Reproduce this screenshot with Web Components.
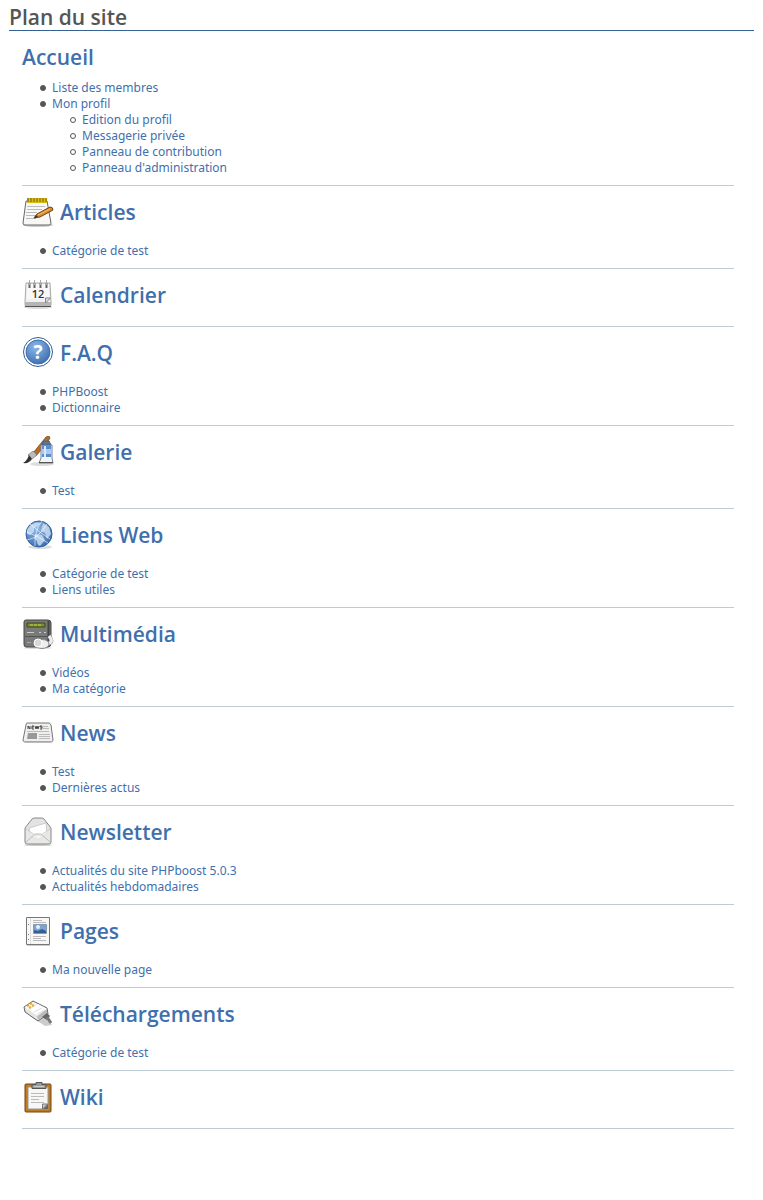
<!DOCTYPE html>
<html lang="fr">
<head>
<meta charset="utf-8">
<title>Plan du site</title>
<style>
body { margin: 0; background: #fff; color: #555; font: 12px/16px "Noto Sans", "Open Sans", sans-serif; }
</style>
</head>
<body>
<site-map></site-map>

<template id="site-map">
<style>
:host { display: block; padding: 4px 9px 70px; }
header { border-bottom: 1px solid #366393; }
h1 { margin: 0; font: 600 21px/26px "Open Sans", sans-serif; }
main { padding: 12px 20px 0 13px; }
ul { margin: 0; padding: 0 0 0 30px; list-style: none; }
li::before { content: ""; display: inline-block; box-sizing: border-box; width: 6px; height: 6px; margin: 0 6px 0 -12px; border: 1px solid #555; border-radius: 50%; background: #555; vertical-align: 1px; }
li li::before { background: none; }
a { color: #3f70ad; text-decoration: none; }
a:hover { text-decoration: underline; }
</style>
<header><h1>Plan du site</h1></header>
<main>
<map-section heading="Accueil"><ul>
<li><a href="#membres">Liste des membres</a></li>
<li><a href="#profil">Mon profil</a><ul>
<li><a href="#edition">Edition du profil</a></li>
<li><a href="#messagerie">Messagerie privée</a></li>
<li><a href="#contribution">Panneau de contribution</a></li>
<li><a href="#administration">Panneau d'administration</a></li>
</ul></li></ul></map-section>
<map-section heading="Articles" icon="articles"><ul><li><a href="#a1">Catégorie de test</a></li></ul></map-section>
<map-section heading="Calendrier" icon="calendar"></map-section>
<map-section heading="F.A.Q" icon="faq"><ul><li><a href="#f1">PHPBoost</a></li><li><a href="#f2">Dictionnaire</a></li></ul></map-section>
<map-section heading="Galerie" icon="gallery"><ul><li><a href="#g1">Test</a></li></ul></map-section>
<map-section heading="Liens Web" icon="web"><ul><li><a href="#w1">Catégorie de test</a></li><li><a href="#w2">Liens utiles</a></li></ul></map-section>
<map-section heading="Multimédia" icon="media"><ul><li><a href="#m1">Vidéos</a></li><li><a href="#m2">Ma catégorie</a></li></ul></map-section>
<map-section heading="News" icon="news"><ul><li><a href="#n1">Test</a></li><li><a href="#n2">Dernières actus</a></li></ul></map-section>
<map-section heading="Newsletter" icon="newsletter"><ul><li><a href="#l1">Actualités du site PHPboost 5.0.3</a></li><li><a href="#l2">Actualités hebdomadaires</a></li></ul></map-section>
<map-section heading="Pages" icon="pages"><ul><li><a href="#p1">Ma nouvelle page</a></li></ul></map-section>
<map-section heading="Téléchargements" icon="download"><ul><li><a href="#t1">Catégorie de test</a></li></ul></map-section>
<map-section heading="Wiki" icon="wiki"></map-section>
</main>
</template>

<template id="map-section">
<style>
:host { display: block; padding-bottom: 1px; margin-bottom: 10px; border-bottom: 1px solid #bdccd4; }
h2 { display: flex; align-items: center; gap: 6px; margin: 0 0 14px; font: 600 21px/32px "Open Sans", sans-serif; }
:host(:not([icon])) h2 { line-height: 28px; margin-bottom: 8px; }
:host(:not([icon])) map-icon { display: none; }
a { color: #3f70ad; text-decoration: none; }
::slotted(ul) { padding-top: 1px !important; padding-bottom: 8px !important; }
</style>
<h2><map-icon></map-icon><a></a></h2>
<slot></slot>
</template>

<script>
const ICONS = {
articles: `<ellipse cx="16" cy="29" rx="15" ry="2" fill="#ccc"/><path d="M4 5h21l4 22q0 2-2 2H3q-2 0-2-2z" fill="#f7f7f6" stroke="#666"/><path d="M5 2h20v5H5z" fill="#d9bc15"/><path d="M6 2v4m3-4v4m3-4v4m3-4v4m3-4v4m3-4v4m3-4v4" stroke="#765f08"/><path d="M5 10.500h18M5 13.500h15M4 16.500h11M4 19.500h9M4 22.500h10" stroke="#bbb"/><path d="M12 22l3-4L28 11q3 0 3 3L18 21z" fill="#d98a2c" stroke="#704214"/><path d="M16 19l12-6" stroke="#f6bd6b"/><path d="M12 22l2-3 2 2z" fill="#333"/>`,
calendar: `<ellipse cx="16" cy="28" rx="14" ry="2" fill="#ddd"/><path d="M4 4h24l1 19v3q0 1-1 1H4q-1 0-1-1v-3z" fill="#f0f0ef" stroke="#aaa"/><path d="M3 23h26v4H3z" fill="#b5b5b3"/><path d="M5 5h22v15H5z" fill="#f8f8f8"/><path d="M7.500 4v5m5-5v5m6-5v5m6-5v5" stroke="#666" stroke-width="2"/><path d="M7.500 1v5m5-5v5m6-5v5m6-5v5" stroke="#aaa"/><text x="16" y="19" font-size="11" font-weight="600" text-anchor="middle" fill="#333">12</text><path d="M23.500 24v-5h5z" fill="#ddd" stroke="#888"/><path d="M3 27.500h26" stroke="#555"/>`,
faq: `<circle cx="16" cy="15" r="14.500" fill="#fff" stroke="#315c98"/><circle cx="16" cy="15" r="12" fill="url(#g)" stroke="#3e6eae"/><text x="16" y="22" font-size="19" font-weight="700" text-anchor="middle" fill="#fff">?</text>`,
gallery: `<ellipse cx="20" cy="28" rx="12" ry="2" fill="#ddd"/><path d="M24 1l3-1 1 2-3 5-11 13-3-3z" fill="#b96b21" stroke="#6e3f17" stroke-width=".7"/><path d="M11 15l4 4-5 4-4-4z" fill="#bbb" stroke="#777" stroke-width=".7"/><path d="M7 19l3 4q-3 5-9 4 4-2 6-8z" fill="#333"/><path d="M19 9h11v13l1 5H17l2-5z" fill="#f1f5fa" stroke="#718294"/><path d="M21 5h6l2 4h-9z" fill="#57769b" stroke="#48658a"/><path d="M20 10h9v3h-9zM20 18h9v3h-9z" fill="#5b8dce"/><path d="M20 13h9v5h-9z" fill="#a9c9ee"/><path d="M22 10h2v11h-2z" fill="#d9e9fb"/><path d="M17 26.500h14" stroke="#555"/>`,
web: `<ellipse cx="18" cy="28" rx="12" ry="2" fill="#ddd"/><circle cx="17" cy="15" r="13" fill="url(#g)" stroke="#315f9d"/><path d="M7 8q5-6 12-4l-4 4-3 1v4l-4 3-3-1q-1-4 2-7zM14 15l6 1 3 5-5 6q-3-1-3-5l-3-3zM21 4l6 4 2 7-4 5-2-6-4-2 1-4z" fill="#d5e5f5" opacity=".75"/><path d="M5 21Q17 19 25 5M8 5q10 9 20 15M5 13q13 5 21 11M20 2q-8 10-7 25" stroke="#fff" opacity=".6"/>`,
media: `<ellipse cx="16" cy="30" rx="14" ry="1" fill="#ddd"/><path d="M4 2h22q3 0 3 3v20q0 4-3 4H4q-2 0-2-3V4q0-2 2-2z" fill="#787b77" stroke="#454745"/><path d="M26.500 3v25" stroke="#444" stroke-width="2"/><path d="M5 5h18v4H5z" fill="#7d8936" stroke="#3f4719"/><path d="M8 7h12" stroke="#c8d64e" stroke-dasharray="3 1"/><path d="M5 14.500h7m5 0h2m3 0h2" stroke="#ccc"/><path d="M3 18.500h23" stroke="#555"/><path d="M5 24.500h4" stroke="#aaa"/><path d="M27 18q6 7-3 8" stroke="#999" stroke-width="4"/><path d="M27 18q6 7-3 8" stroke="#eee" stroke-width="3"/><ellipse cx="20" cy="26" rx="7" ry="4.500" fill="#eee" stroke="#888"/><circle cx="16" cy="25" r="4" fill="#d8d8d8" stroke="#fff"/>`,
news: `<path d="M5 6h22q1 0 2 2l2 15q0 2-2 2H3q-2 0-2-2L4 8q0-2 1-2z" fill="#efefee" stroke="#777"/><path d="M1 24.500h30" stroke="#aaa"/><path d="M6 12V9l2 3V9m2 0v3m0-3h2m-2 1h2m-2 2h2m1-3l1 3 1-3 1 3 1-3m3 0h-2v1h2v2h-2" stroke="#444"/><path d="M20 9.500h6M20 11.500h7M5 14.500h22M17 17.500h11M17 19.500h11M17 21.500h11" stroke="#bbb"/><path d="M6 16h9v6H5z" fill="#999"/>`,
newsletter: `<ellipse cx="16" cy="29" rx="14" ry="1" fill="#ccc"/><path d="M3 12L10 3q1-1 3-1h6q2 0 3 1l7 9v14q0 2-2 2H5q-2 0-2-2z" fill="#e3e3e2" stroke="#888"/><path d="M7 12l17-5 1 11-9 6-8-5z" fill="#fff" stroke="#ccc"/><path d="M4 13l11 8h2l11-8v13q0 1-2 1H5l-1-1z" fill="#e9e9e8" fill-opacity=".75"/><path d="M4 26l9-8h6l9 8" stroke="#bbb"/><path d="M4 13l9 6h6l9-6" stroke="#ccc"/>`,
pages: `<path d="M4.500 2.500h23v27h-23z" fill="#f7f7f6" stroke="#777"/><path d="M5 30.500h23" stroke="#ccc"/><path d="M8.500 3v26" stroke="#ddd"/><path d="M6 9.500h1M6 19.500h1M6 24.500h1" stroke="#777"/><path d="M11 5.500h9M11 7.500h13M11 21.500h13M11 23.500h8M11 25.500h13" stroke="#bbb"/><path d="M11.500 9.500h13v9h-13z" fill="#79a4d8" stroke="#8898aa"/><circle cx="16" cy="12" r="2" fill="#e8f3ff"/><path d="M12 18v-3l4 1 4-2 4 2v2z" fill="#365d90"/>`,
download: `<path d="M8 18l15 10 7-1-5-7z" fill="#ccc"/><path d="M2 9l9-6 14 7 1 6-10 7L3 14z" fill="#e5e5e3" stroke="#666"/><path d="M3 9l8-5 4 2-9 6z" fill="#f8f8f7"/><path d="M5 8l2-1M8 6l2-1M7 10l2-1M10 8l2-1" stroke="#eba62c" stroke-width="2"/><path d="M7 12l9-6 9 5-9 7z" fill="#fff"/><path d="M12 14l8-4m-5 6l8-4" stroke="#ddd"/><path d="M16 22l-1-4 10-7v5z" fill="#bbb"/><path d="M20 19l5-4 3 3-3 4z" fill="#666"/><path d="M25 19l4 6" stroke="#777" stroke-width="3"/>`,
wiki: `<path d="M3 4q0-1 1-1h24q1 0 1 1v26q0 1-1 1H4q-1 0-1-1z" fill="#bf7a22" stroke="#754410"/><path d="M6 6h20v22H6z" fill="#f7f7f6" stroke="#999"/><path d="M9 12.500h13M9 15.500h13M9 18.500h8M9 21.500h13" stroke="#bbb"/><path d="M10 7.500v-4h4v-2h6v2h4v4z" fill="#999c98" stroke="#555"/><path d="M12 5.500h10" stroke="#ccc"/><path d="M20.500 28v-5h5z" fill="#ccc" stroke="#777"/><path d="M21 28l5-5v5z" fill="#666"/>`
};

class MapIcon extends HTMLElement {
  static observedAttributes = ["name"];
  constructor() { super(); this.attachShadow({ mode: "open" }); }
  attributeChangedCallback() {
    this.shadowRoot.innerHTML = `<style>:host{display:block;width:32px;height:32px;flex:none}svg{display:block}</style>
      <svg width="32" height="32" viewBox="0 0 32 32" fill="none" aria-hidden="true"><defs><radialGradient id="g" cx=".4" cy=".3" r=".8"><stop stop-color="#8fb8e8"/><stop offset="1" stop-color="#3468ad"/></radialGradient></defs>${ICONS[this.getAttribute("name")] || ""}</svg>`;
  }
}
class MapSection extends HTMLElement {
  constructor() {
    super();
    this.attachShadow({ mode: "open" }).append(document.getElementById("map-section").content.cloneNode(true));
  }
  connectedCallback() {
    const link = this.shadowRoot.querySelector("a");
    link.textContent = this.getAttribute("heading");
    link.href = "#" + (this.getAttribute("icon") || "accueil");
    if (this.hasAttribute("icon")) this.shadowRoot.querySelector("map-icon").setAttribute("name", this.getAttribute("icon"));
  }
}
class SiteMap extends HTMLElement {
  constructor() {
    super();
    this.attachShadow({ mode: "open" }).append(document.getElementById("site-map").content.cloneNode(true));
  }
}
customElements.define("map-icon", MapIcon);
customElements.define("map-section", MapSection);
customElements.define("site-map", SiteMap);
</script>
</body>
</html></script>
